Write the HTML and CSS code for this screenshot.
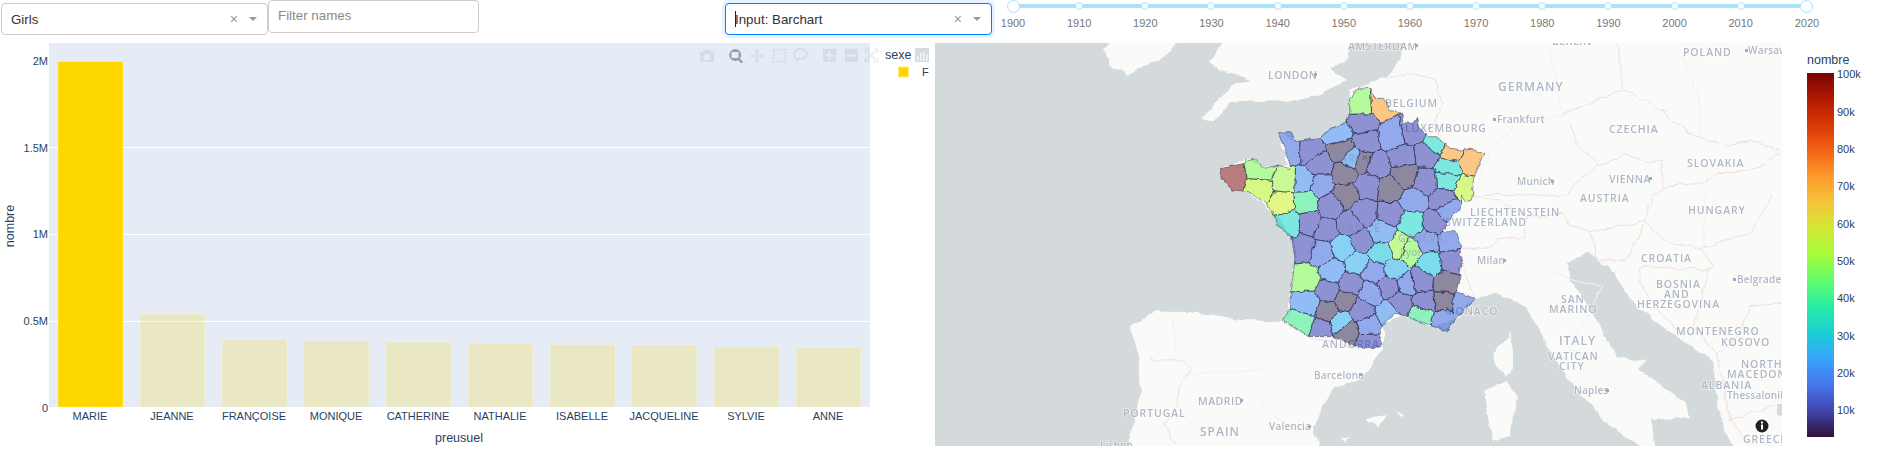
FILE: index.html

```html
<!DOCTYPE html>
<html lang="en">
<head>
  <meta charset="UTF-8" />
  <meta name="viewport" content="width=device-width, initial-scale=1" />
  <title>Prénoms</title>
  <link rel="stylesheet" href="styles.css">
</head>
<body>
  <div class="controls">
    <div class="select select-gender">
      <span class="select-value">Girls</span>
      <span class="select-clear">×</span>
      <span class="select-arrow"></span>
    </div>
    <input class="name-filter" type="text" placeholder="Filter names" />

    <div class="select select-input is-focused">
      <span class="select-value"><span class="text-cursor"></span>Input: Barchart</span>
      <span class="select-clear">×</span>
      <span class="select-arrow"></span>
    </div>

    <div class="slider">
      <div class="mark is-end"><span class="dot"></span><span class="mark-label">1900</span></div>
      <div class="mark"><span class="dot"></span><span class="mark-label">1910</span></div>
      <div class="mark"><span class="dot"></span><span class="mark-label">1920</span></div>
      <div class="mark"><span class="dot"></span><span class="mark-label">1930</span></div>
      <div class="mark"><span class="dot"></span><span class="mark-label">1940</span></div>
      <div class="mark"><span class="dot"></span><span class="mark-label">1950</span></div>
      <div class="mark"><span class="dot"></span><span class="mark-label">1960</span></div>
      <div class="mark"><span class="dot"></span><span class="mark-label">1970</span></div>
      <div class="mark"><span class="dot"></span><span class="mark-label">1980</span></div>
      <div class="mark"><span class="dot"></span><span class="mark-label">1990</span></div>
      <div class="mark"><span class="dot"></span><span class="mark-label">2000</span></div>
      <div class="mark"><span class="dot"></span><span class="mark-label">2010</span></div>
      <div class="mark is-end"><span class="dot"></span><span class="mark-label">2020</span></div>
    </div>
  </div>

  <div class="graphs">
    <!-- bar chart -->
    <svg class="bar-chart" width="935" height="420" viewBox="0 43 935 420">
      <rect class="plot-bg" x="49" y="43" width="821" height="364" />
      <g class="grid">
        <line x1="49" x2="870" y1="147.5" y2="147.5" />
        <line x1="49" x2="870" y1="234.5" y2="234.5" />
        <line x1="49" x2="870" y1="321.5" y2="321.5" />
      </g>
      <rect class="bar bar-on" x="58" y="61.5" width="65" height="345.5" />
      <rect class="bar" x="140" y="314" width="65" height="93" />
      <rect class="bar" x="222" y="340" width="65" height="67" />
      <rect class="bar" x="304" y="340.7" width="65" height="66.3" />
      <rect class="bar" x="386" y="341.7" width="65" height="65.3" />
      <rect class="bar" x="468" y="343.7" width="65" height="63.3" />
      <rect class="bar" x="550" y="344.3" width="65" height="62.7" />
      <rect class="bar" x="632" y="345" width="65" height="62" />
      <rect class="bar" x="714" y="346.7" width="65" height="60.3" />
      <rect class="bar" x="796" y="347" width="65" height="60" />

      <g class="tick tick-y">
        <text x="48" y="65">2M</text>
        <text x="48" y="152">1.5M</text>
        <text x="48" y="238">1M</text>
        <text x="48" y="325">0.5M</text>
        <text x="48" y="412">0</text>
      </g>
      <g class="tick tick-x">
        <text x="90" y="420">MARIE</text>
        <text x="172" y="420">JEANNE</text>
        <text x="254" y="420">FRANÇOISE</text>
        <text x="336" y="420">MONIQUE</text>
        <text x="418" y="420">CATHERINE</text>
        <text x="500" y="420">NATHALIE</text>
        <text x="582" y="420">ISABELLE</text>
        <text x="664" y="420">JACQUELINE</text>
        <text x="746" y="420">SYLVIE</text>
        <text x="828" y="420">ANNE</text>
      </g>
      <text class="axis-title" x="459" y="442" text-anchor="middle">preusuel</text>
      <text class="axis-title" transform="translate(14 226) rotate(-90)" text-anchor="middle">nombre</text>

      <!-- modebar -->
      <g class="modebar">
        <path d="M700 52h3l1-2h6l1 2h3v10h-14zM707 53.500a3.500 3.500 0 1 0 .01 0z" fill-rule="evenodd" />
        <path class="mode-active" d="M735 49a6 6 0 0 1 4.800 9.600l3.200 3.200-1.600 1.600-3.200-3.200A6 6 0 1 1 735 49zm-3.500 3v6h7v-6z" fill-rule="evenodd" />
        <path d="M757 49l2.500 2.500h-1.700v3.700h3.700v-1.700l2.500 2.500-2.500 2.500v-1.700h-3.700v3.700h1.700l-2.500 2.500-2.500-2.500h1.700v-3.700h-3.700v1.700l-2.500-2.500 2.500-2.500v1.700h3.700v-3.700h-1.700z" />
        <path class="mode-dash" d="M773.500 49.500h12v12h-12z" />
        <path class="mode-line" d="M794 54c0-3 3-5 6.500-5s6.500 2 6.500 5-3 5-6.500 5c-1 0-2 0-3-.5l-1 3.500M796 59c-1-1-2-3-2-5" />
        <path d="M823 49h13v13h-13zM828.500 51v3.500h-3.500v2h3.500v3.500h2v-3.500h3.500v-2h-3.500v-3.500z" fill-rule="evenodd" />
        <path d="M845 49h13v13h-13zM847 54.500v2h9v-2z" fill-rule="evenodd" />
        <path class="mode-line" d="M865.500 53v-3.500h3.500M874 49.500h3.500v3.500M877.500 58v3.500h-3.500M869 61.500h-3.500v-3.500M868 52l7 7M875 52l-7 7" />
        <rect class="mode-bars" x="915" y="48" width="14" height="14" />
        <path class="mode-bars-in" d="M917 56h1.500v5h-1.500zM920 53h1.500v8h-1.500zM923 52h1.500v9h-1.500zM926 54h1.500v7h-1.500z" />
      </g>

      <!-- legend -->
      <text class="legend-title" x="885" y="59">sexe</text>
      <rect class="legend-swatch" x="898.500" y="67" width="10" height="10" />
      <text class="legend-item" x="922" y="76">F</text>
    </svg>

    <!-- map -->
    <svg class="map" width="847" height="403" viewBox="935 43 847 403">
      <defs>
        <filter id="coast" x="-5%" y="-5%" width="110%" height="110%">
          <feTurbulence type="fractalNoise" baseFrequency="0.07" numOctaves="3" seed="4" />
          <feDisplacementMap in="SourceGraphic" scale="7" xChannelSelector="R" yChannelSelector="G" />
        </filter>
        <filter id="rough" x="-5%" y="-5%" width="110%" height="110%">
          <feTurbulence type="fractalNoise" baseFrequency="0.14" numOctaves="2" seed="9" />
          <feDisplacementMap in="SourceGraphic" scale="5" xChannelSelector="R" yChannelSelector="G" />
        </filter>
        <clipPath id="france-clip">
          <polygon id="france-shape" points="635,25 660,25 675,55 700,55 722,90 755,100 760,128 790,130 800,112 805,140 835,170 865,170 872,178 900,205 935,210 965,208 1003,220 985,260 970,300 968,340 965,360 945,365 935,345 930,385 885,435 880,455 920,455 935,500 925,525 940,540 930,575 935,600 920,625 925,640 975,655 925,710 905,735 890,752 850,740 765,708 735,700 700,730 690,750 695,800 630,805 570,775 540,770 485,770 470,768 395,718 415,705 425,625 435,535 430,505 425,470 385,440 370,405 350,370 320,350 295,335 245,330 225,305 210,290 212,265 285,250 285,240 315,235 345,265 385,255 420,268 405,205 385,155 425,155 435,185 510,175 545,145 590,125 600,95 598,60 610,35" />
        </clipPath>
      </defs>
      <rect class="sea" x="935" y="43" width="847" height="403" />
      <g class="base">
        <g filter="url(#coast)">
          <!-- mainland, in page coordinates -->
          <polygon class="land" points="1407,30 1400,60 1387,77 1365,84 1350,92 1349,112 1347,122 1320,138 1295,142 1281,131 1278,134 1288,165 1275,168 1245,160 1221,168 1220,177 1232,190 1248,192 1273,213 1293,237 1295,258 1288,315 1282,322 1247,320 1200,313 1157,310 1130,327 1138,357 1140,393 1125,460 1322,460 1313,427 1332,390 1363,377 1383,350 1383,323 1405,316 1433,327 1458,317 1475,298 1497,292 1527,307 1543,340 1567,377 1603,420 1660,460 1800,460 1800,30" />
          <!-- adriatic and ionian, over the mainland -->
          <polygon class="sea" points="1567,263 1590,252 1597,260 1610,267 1633,303 1670,333 1712,360 1715,380 1723,430 1745,460 1655,460 1652,420 1690,417 1687,403 1640,370 1647,362 1617,357 1593,313 1570,280" />
          <polygon class="sea" points="1777,403 1800,403 1800,417 1778,414" />
          <!-- corsica, sardinia, balearics -->
          <polygon class="land" points="1508,330 1507,340 1497,347 1493,357 1505,378 1513,367 1513,350" />
          <polygon class="land" points="1485,390 1507,380 1517,397 1510,437 1493,442 1488,417" />
          <polygon class="land" points="1367,418 1387,415 1378,428" />
          <polygon class="land" points="1395,411 1405,415 1402,418" />
          <polygon class="land" points="1342,438 1350,436 1346,442" />
          <!-- ireland and britain -->
          <polygon class="land" points="1103,50 1120,30 1187,30 1163,57 1127,75 1113,67" />
          <polygon class="land" points="1233,30 1210,62 1220,70 1253,78 1263,73 1230,87 1213,107 1202,118 1213,122 1230,103 1273,100 1290,102 1320,95 1347,80 1330,68 1347,58 1360,30" />
        </g>

        <g filter="url(#coast)">
          <g class="borders" transform="translate(1350 40) scale(.3333)">
            <polyline points="110,115 170,100 260,120 275,190 250,265 290,300" />
            <polyline points="800,10 820,130 830,155" />
            <polyline points="640,225 760,170 830,155 900,190 940,215" />
            <polyline points="660,250 680,310 745,375 800,360 820,340 900,370 935,360" />
            <polyline points="935,210 980,250 1050,290 1130,320 1200,300 1290,330" />
            <polyline points="745,375 680,430 650,465 560,470 430,460 370,470" />
            <polyline points="370,470 450,480 530,530 520,590 440,600 420,620 330,630 340,700 375,770" />
            <polyline points="530,530 640,520 660,555 720,575 880,545" />
            <polyline points="935,360 940,440 910,470 885,545 960,610 1060,625 1130,600 1200,580 1270,460" />
            <polyline points="940,440 1050,430 1100,400 1200,390 1295,340" />
            <polyline points="720,575 740,660 830,660 860,600 885,545" />
            <polyline points="865,685 900,680 1060,690 1090,680 1060,625" />
            <polyline points="865,685 880,750 960,850 1000,880" />
            <polyline points="1070,690 1060,760 1030,860 1100,940 1160,900 1200,800 1295,790" />
            <polyline points="1100,940 1120,1030 1140,1140 1180,1190" />
            <polyline points="1140,1140 1295,1090" />
            <polyline class="faint" points="640,225 500,250 420,330 370,470" />
            <polyline class="faint" points="600,30 620,150 640,225" />
            <polyline class="faint" points="450,60 520,150 600,180" />
            <polyline class="faint" points="1000,50 1050,180 1050,290" />
            <polyline class="faint" points="1060,625 1070,450" />
            <polyline class="faint" points="600,700 760,740 660,920 850,1100" />
          </g>
          <g class="borders" transform="translate(930 40) scale(.3333)">
            <polyline points="660,945 670,965 760,960 780,990 745,1050 745,1100 700,1150 735,1215" />
            <polyline points="1055,845 1140,890 1290,925" />
            <polyline class="faint" points="730,840 740,960" />
            <polyline class="faint" points="790,1000 1010,990 1060,930" />
            <polyline class="faint" points="950,1030 1000,1100 1100,1180" />
          </g>
        </g>

        <g class="map-label">
          <text class="city-cap" x="1268" y="79">LONDON</text>
          <text class="city-cap" x="1348" y="50">AMSTERDAM</text>
          <text class="city-cap" x="1552" y="45">BERLIN</text>
          <text class="country" x="1385" y="107">BELGIUM</text>
          <text class="country" x="1405" y="132">LUXEMBOURG</text>
          <text class="country-big" x="1498" y="91">GERMANY</text>
          <text class="country" x="1683" y="56">POLAND</text>
          <text class="city" x="1497" y="123">Frankfurt</text>
          <text class="city" x="1748" y="54">Warsaw</text>
          <text class="country" x="1609" y="133">CZECHIA</text>
          <text class="country" x="1687" y="167">SLOVAKIA</text>
          <text class="city" x="1517" y="185">Munich</text>
          <text class="city-cap" x="1609" y="183">VIENNA</text>
          <text class="country" x="1580" y="202">AUSTRIA</text>
          <text class="country" x="1470" y="216">LIECHTENSTEIN</text>
          <text class="country" x="1445" y="226">SWITZERLAND</text>
          <text class="country" x="1688" y="214">HUNGARY</text>
          <text class="city" x="1477" y="264">Milan</text>
          <text class="country" x="1641" y="262">CROATIA</text>
          <text class="country" x="1656" y="288">BOSNIA</text>
          <text class="country" x="1664" y="298">AND</text>
          <text class="country" x="1637" y="308">HERZEGOVINA</text>
          <text class="city" x="1737" y="283">Belgrade</text>
          <text class="country" x="1561" y="303">SAN</text>
          <text class="country" x="1549" y="313">MARINO</text>
          <text class="country-big" x="1559" y="345">ITALY</text>
          <text class="country" x="1548" y="360">VATICAN</text>
          <text class="country" x="1559" y="370">CITY</text>
          <text class="city" x="1574" y="394">Naples</text>
          <text class="country" x="1676" y="335">MONTENEGRO</text>
          <text class="country" x="1721" y="346">KOSOVO</text>
          <text class="country" x="1741" y="368">NORTH</text>
          <text class="country" x="1727" y="378">MACEDONIA</text>
          <text class="country" x="1701" y="389">ALBANIA</text>
          <text class="city" x="1727" y="399">Thessaloniki</text>
          <text class="country" x="1743" y="443">GREECE</text>
          <text class="country" x="1445" y="315">MONACO</text>
          <text class="country" x="1322" y="348">ANDORRA</text>
          <text class="city" x="1314" y="379">Barcelona</text>
          <text class="city-cap" x="1198" y="405">MADRID</text>
          <text class="city" x="1269" y="430">Valencia</text>
          <text class="country" x="1123" y="417">PORTUGAL</text>
          <text class="country-big" x="1200" y="436">SPAIN</text>
          <text class="city" x="1100" y="449">Lisbon</text>
        </g>
        <g class="map-dots">
          <rect x="1314" y="73" width="3" height="3" />
          <rect x="1415" y="44" width="3" height="3" />
          <rect x="1493" y="118" width="3" height="3" />
          <rect x="1745" y="49" width="3" height="3" />
          <rect x="1551" y="180" width="3" height="3" />
          <rect x="1649" y="177" width="3" height="3" />
          <rect x="1503" y="259" width="3" height="3" />
          <rect x="1733" y="278" width="3" height="3" />
          <rect x="1606" y="389" width="3" height="3" />
          <rect x="1359" y="373" width="3" height="3" />
          <rect x="1240" y="399" width="3" height="3" />
          <rect x="1308" y="425" width="3" height="3" />
        </g>
      </g>

      <!-- departements, in 3x coordinates of the France area, map.js closes the gaps -->
      <g filter="url(#rough)">
        <g transform="translate(1150 80) scale(.3333)">
          <g id="depts" class="depts" clip-path="url(#france-clip)">
            <polygon class="orange" points="635,25 660,25 675,60 700,55 720,90 755,100 760,128 695,125 680,85 650,65 640,50" />
            <polygon class="green" points="610,35 635,30 645,65 680,85 695,122 650,115 600,95 598,60" />
            <polygon class="purple" points="600,95 650,115 695,125 695,160 610,152 590,125" />
            <polygon class="blue" points="510,175 545,145 590,125 610,152 605,180 570,195 520,180" />
            <polygon class="peri" points="695,125 760,130 760,170 725,230 695,190" />
            <polygon class="purple" points="760,130 790,130 800,115 830,165 810,200 755,185" />
            <polygon class="purple" points="610,152 695,160 693,212 640,205 608,185" />
            <polygon class="dark" points="525,180 570,195 605,180 610,215 590,245 545,225" />
            <polygon class="purple" points="435,185 520,182 525,225 470,240 440,225" />
            <polygon class="peri" points="385,155 425,155 435,225 455,260 420,268 405,205" />
            <polygon class="dark" points="610,205 660,207 650,285 625,285 630,235" />
            <polygon class="blue" points="595,218 625,220 612,270 597,240" />
            <polygon class="purple" points="660,215 693,212 715,265 680,300 645,290" />
            <polygon class="purple" points="725,230 740,190 805,200 805,250 760,250 715,265" />
            <polygon class="purple" points="810,190 830,170 860,225 850,275 805,250" />
            <polygon class="purple" points="460,240 525,225 558,250 560,285 500,270 455,265" />
            <polygon class="dark" points="560,245 590,245 625,285 615,310 570,315 555,285" />
            <polygon class="purple" points="610,310 640,290 680,300 690,320 680,352 620,335" />
            <polygon class="dark" points="680,320 695,280 740,300 765,340 750,372 690,350" />
            <polygon class="dark" points="715,265 760,250 800,280 795,310 760,318" />
            <polygon class="purple" points="800,255 850,275 860,320 830,350 795,310" />
            <polygon class="turq" points="860,225 935,265 938,278 845,280" />
            <polygon class="turq" points="845,280 935,280 925,325 855,315" />
            <polygon class="turq" points="838,172 865,170 870,215 855,215" />
            <polygon class="orange" points="870,178 900,205 935,210 940,265 870,225" />
            <polygon class="orange" points="935,215 965,208 1003,220 970,300 940,265" />
            <polygon class="lime" points="945,290 968,305 965,360 945,365 925,330" />
            <polygon class="red" points="212,265 285,250 295,330 245,330 225,305 210,290" />
            <polygon class="green" points="285,240 315,235 345,265 385,255 380,305 345,300 285,295" />
            <polygon class="lime" points="278,300 345,300 375,320 370,358 320,350 295,335" />
            <polygon class="lgreen" points="385,255 435,270 440,330 395,342 372,318" />
            <polygon class="yellow" points="350,370 380,340 430,332 445,370 410,412 375,385" />
            <polygon class="blue" points="440,270 495,270 485,315 465,335 440,335" />
            <polygon class="peri" points="495,275 525,275 555,315 525,350 480,345 480,320" />
            <polygon class="mint" points="430,335 480,345 515,350 500,390 440,402 445,370" />
            <polygon class="turq" points="370,405 410,412 445,402 465,460 420,465 385,440" />
            <polygon class="purple" points="445,402 500,395 510,460 465,460" />
            <polygon class="purple" points="500,395 545,425 560,470 510,485 510,460" />
            <polygon class="purple" points="515,350 550,345 580,380 560,420 505,395" />
            <polygon class="dark" points="555,310 615,315 635,370 585,385 550,345" />
            <polygon class="purple" points="635,355 680,355 690,420 650,440 620,430 585,385" />
            <polygon class="purple" points="585,385 625,430 640,455 590,460 555,430" />
            <polygon class="purple" points="680,355 750,375 750,415 725,435 690,430" />
            <polygon class="peri" points="765,315 795,315 835,355 835,395 800,410 755,395 755,340" />
            <polygon class="purple" points="835,350 920,325 930,355 880,370 835,385" />
            <polygon class="peri" points="885,370 930,355 930,385 885,435 860,405" />
            <polygon class="purple" points="835,385 860,405 880,440 860,470 830,455" />
            <polygon class="turq" points="755,395 800,410 835,405 830,450 770,475 730,440" />
            <polygon class="blue" points="645,440 690,430 725,435 745,465 720,495 660,475" />
            <polygon class="purple" points="590,460 640,455 660,480 650,515 610,520" />
            <polygon class="sky" points="560,470 590,460 610,520 590,540 560,520" />
            <polygon class="purple" points="430,470 465,462 510,485 490,565 450,530 425,500" />
            <polygon class="peri" points="480,520 510,485 555,490 530,530 495,565" />
            <polygon class="blue" points="505,565 540,525 585,545 590,590 560,612 515,600" />
            <polygon class="sky" points="585,540 610,520 650,520 655,545 625,585 590,590" />
            <polygon class="sky2" points="660,510 675,475 720,495 745,545 700,548 660,545" />
            <polygon class="lgreen" points="735,475 765,470 770,510 745,540 730,510" />
            <polygon class="green" points="765,470 790,475 810,520 780,555 745,540 770,510" />
            <polygon class="peri" points="800,470 830,450 860,470 855,510 825,515" />
            <polygon class="peri" points="865,465 920,455 935,500 900,510 860,485" />
            <polygon class="purple" points="850,515 905,510 940,540 930,575 890,570" />
            <polygon class="sky2" points="825,510 850,520 890,575 850,605 800,540" />
            <polygon class="purple" points="800,555 845,605 840,640 790,640 785,575" />
            <polygon class="dark" points="850,610 895,575 935,600 915,625 840,645" />
            <polygon class="dark" points="840,650 915,625 925,670 890,690 850,680" />
            <polygon class="peri" points="925,640 975,655 925,710 915,685" />
            <polygon class="peri" points="855,690 920,690 910,735 890,750 850,740" />
            <polygon class="mint" points="790,675 850,690 850,738 765,708" />
            <polygon class="purple" points="790,640 840,650 850,690 815,690" />
            <polygon class="peri" points="745,600 795,555 800,640 770,640 745,625" />
            <polygon class="sky" points="700,548 745,545 775,570 735,600 715,590" />
            <polygon class="peri" points="650,545 700,550 705,585 660,610 635,580" />
            <polygon class="purple" points="690,600 735,590 750,625 715,655 690,630" />
            <polygon class="peri" points="620,620 660,590 690,625 710,680 670,690 625,650" />
            <polygon class="purple" points="570,610 625,580 635,600 600,640 570,635" />
            <polygon class="purple" points="715,655 770,640 790,665 760,705 715,670" />
            <polygon class="blue" points="665,705 710,680 745,670 760,705 700,730" />
            <polygon class="purple" points="605,670 625,650 670,695 665,715 610,715" />
            <polygon class="peri" points="610,715 665,718 700,735 680,765 620,770" />
            <polygon class="purple" points="620,775 680,762 695,800 630,805" />
            <polygon class="dark" points="555,745 585,730 625,745 625,785 570,775" />
            <polygon class="sky" points="535,730 570,715 585,680 610,715 585,730 555,745 545,775" />
            <polygon class="dark" points="555,650 600,640 620,650 590,680 555,685" />
            <polygon class="purple" points="500,645 515,605 560,612 565,640 545,665" />
            <polygon class="dark" points="490,680 545,665 570,690 560,722 500,715" />
            <polygon class="purple" points="500,720 530,725 540,770 485,770" />
            <polygon class="mint" points="395,718 430,705 500,705 495,745 470,768" />
            <polygon class="blue" points="425,625 500,650 510,665 490,680 495,705 415,705" />
            <polygon class="green" points="435,535 470,575 515,600 495,650 435,620" />
          </g>
          <use class="france-line" href="#france-shape" />
          <polygon class="paris-spot" points="640,230 650,230 650,240 640,240" />
        </g>
      </g>

      <!-- labels that show through the departements -->
      <g class="map-label over-label">
        <text class="country" x="1333" y="162">PARIS</text>
        <text class="country-big" x="1330" y="232">FRANCE</text>
        <text class="country" x="1398" y="242">GENEVA</text>
        <text class="city" x="1400" y="256">Lyon</text>
      </g>

      <g class="info-icon">
        <circle class="info-halo" cx="1762" cy="426" r="9" />
        <circle cx="1762" cy="426" r="6.500" />
        <path class="info-i" d="M1761 424.500h2v5h-2zM1761 421.500h2v2h-2z" />
      </g>
    </svg>

    <!-- colour scale -->
    <svg class="colorbar" width="105" height="420" viewBox="1782 43 105 420">
      <defs>
        <linearGradient id="turbo" x1="0" y1="1" x2="0" y2="0">
          <stop offset="0" stop-color="#30123b" />
          <stop offset=".0714" stop-color="#4145ab" />
          <stop offset=".1429" stop-color="#4675ed" />
          <stop offset=".2143" stop-color="#39a2fc" />
          <stop offset=".2857" stop-color="#1bcfd4" />
          <stop offset=".3571" stop-color="#24eca6" />
          <stop offset=".4286" stop-color="#61fc6c" />
          <stop offset=".5" stop-color="#a4fc3b" />
          <stop offset=".5714" stop-color="#d1e834" />
          <stop offset=".6429" stop-color="#f3c63a" />
          <stop offset=".7143" stop-color="#fe9b2d" />
          <stop offset=".7857" stop-color="#f36315" />
          <stop offset=".8571" stop-color="#d93806" />
          <stop offset=".9286" stop-color="#b11901" />
          <stop offset="1" stop-color="#7a0403" />
        </linearGradient>
      </defs>
      <text class="legend-title" x="1807" y="64">nombre</text>
      <rect x="1807" y="73" width="27" height="364" fill="url(#turbo)" />
      <g class="tick">
        <text x="1837" y="78">100k</text>
        <text x="1837" y="116">90k</text>
        <text x="1837" y="153">80k</text>
        <text x="1837" y="190">70k</text>
        <text x="1837" y="228">60k</text>
        <text x="1837" y="265">50k</text>
        <text x="1837" y="302">40k</text>
        <text x="1837" y="340">30k</text>
        <text x="1837" y="377">20k</text>
        <text x="1837" y="414">10k</text>
      </g>
    </svg>
  </div>
  <script src="map.js"></script>
</body>
</html>
```

FILE: styles.css

```css
body {
  margin: 0;
  overflow: hidden;
  background-color: #fff;
  font-family: 'Liberation Sans', Arial, sans-serif;
  color: #333;
}

.controls {
  display: flex;
  align-items: flex-start;
  height: 43px;
}

.select {
  display: flex;
  align-items: center;
  box-sizing: border-box;
  width: 267px;
  height: 32px;
  margin-top: 3px;
  padding: 0 10px 0 9px;
  border: 1px solid #ccc;
  border-radius: 4px;
  font-size: 13.333px;
  background: #fff;
}

.select-gender {
  margin-left: 1px;
}

.select-value {
  flex: 1;
  color: #333;
}

.select-clear {
  margin-right: 11px;
  font-size: 14px;
  line-height: 16px;
  color: #999;
}

.select-arrow {
  width: 0;
  height: 0;
  border-top: 4px solid #999;
  border-left: 4px solid transparent;
  border-right: 4px solid transparent;
}

.name-filter {
  box-sizing: border-box;
  width: 211px;
  height: 33px;
  padding: 0 10px 3px 9px;
  border: 1px solid #ccc;
  border-radius: 4px;
  font-family: inherit;
  font-size: 13.333px;
  color: #333;
}

.name-filter::placeholder {
  color: #8a8a8a;
}

.select-input {
  margin-left: 246px;
}

.is-focused {
  border-color: #007eff;
  box-shadow: 0 0 0 3px rgba(0, 126, 255, 0.1);
}

.text-cursor {
  display: inline-block;
  width: 1px;
  height: 16px;
  margin-right: -1px;
  vertical-align: -3px;
  background: #222;
}

.slider {
  display: flex;
  justify-content: space-between;
  width: 794px;
  height: 34px;
  margin-left: 21px;
  background: linear-gradient(#abe2fb, #abe2fb) no-repeat 0 4px / 100% 4px;
}

.mark {
  display: flex;
  flex-direction: column;
  align-items: center;
  width: 0;
}

.dot {
  flex: none;
  box-sizing: border-box;
  width: 8px;
  height: 8px;
  margin-top: 2px;
  margin-bottom: 6px;
  border: 1px solid #abe2fb;
  border-radius: 50%;
  background: #fff;
}

.is-end .dot {
  width: 13px;
  height: 13px;
  margin-top: 0;
  margin-bottom: 3px;
  border-width: 1.5px;
}

.mark-label {
  font-size: 11px;
  line-height: 14px;
  color: #777;
}

.graphs {
  display: flex;
  align-items: flex-start;
}

.graphs svg {
  display: block;
  flex: none;
}

/* bar chart */
.plot-bg {
  fill: #e5ecf6;
}

.grid line {
  stroke: #fff;
  stroke-width: 1;
}

.bar {
  fill: rgba(255, 215, 0, 0.2);
  stroke: rgba(255, 255, 255, 0.25);
  stroke-width: 1;
}

.bar-on {
  fill: #ffd700;
}

.tick text {
  font-size: 11px;
  fill: #2a3f5f;
}

.tick-y text {
  text-anchor: end;
}

.tick-x text {
  text-anchor: middle;
}

.axis-title {
  font-size: 12.5px;
  fill: #2a3f5f;
}

.legend-title {
  font-size: 12.5px;
  fill: #2a3f5f;
}

.legend-item {
  font-size: 11px;
  fill: #2a3f5f;
}

.legend-swatch {
  fill: #ffd700;
  stroke: #ffe97a;
  stroke-width: 1;
}

.modebar path {
  fill: rgba(68, 68, 68, 0.09);
}

.modebar .mode-active {
  fill: #9a9ea6;
}

.modebar .mode-dash {
  fill: none;
  stroke: rgba(68, 68, 68, 0.12);
  stroke-width: 1.500;
  stroke-dasharray: 2 1.500;
}

.modebar .mode-line {
  fill: none;
  stroke: rgba(68, 68, 68, 0.1);
  stroke-width: 1.500;
}

.mode-bars {
  fill: #d5dbe3;
}

.modebar .mode-bars-in {
  fill: #fff;
  opacity: 0.7;
}

/* map */
.sea {
  fill: #d4dadc;
}

.land {
  fill: #fafaf8;
}

.base {
  filter: blur(0.3px);
}

.borders polyline {
  fill: none;
  stroke: #f1dde0;
  stroke-width: 3;
}

.borders .faint {
  stroke: #f3f0f0;
}

.map-label text {
  font-family: 'Open Sans', sans-serif;
  font-weight: 600;
  fill: #aeb7c5;
  stroke: rgba(255, 255, 255, 0.6);
  stroke-width: 1.5px;
  paint-order: stroke;
}

.over-label {
  opacity: 0.45;
}

.over-label text {
  fill: #7f8db8;
  stroke: none;
}

.map-label .country {
  font-size: 10.5px;
  letter-spacing: 0.9px;
}

.map-label .country-big {
  font-size: 12px;
  letter-spacing: 1px;
}

.map-label .city {
  font-size: 10px;
  letter-spacing: 0.2px;
}

.map-label .city-cap {
  font-size: 10.5px;
  letter-spacing: 0.5px;
}

.map-dots rect {
  fill: #a0aaba;
}

.depts polygon {
  fill-opacity: 0.5;
  stroke: #2f3350;
  stroke-opacity: 0.8;
  stroke-width: 2.400;
  stroke-linejoin: round;
}

.france-line {
  fill: none;
  stroke: #2f3350;
  stroke-opacity: 0.75;
  stroke-width: 2;
  stroke-linejoin: round;
}

.paris-spot {
  fill: #f0a030;
  stroke: #2f3350;
  stroke-width: 2;
}

.depts .dark { fill: #200e46; }
.depts .purple { fill: #242cac; }
.depts .peri { fill: #2c5ae0; }
.depts .blue { fill: #2c80f0; }
.depts .sky { fill: #0ea6f0; }
.depts .sky2 { fill: #06bde0; }
.depts .turq { fill: #02d6c6; }
.depts .mint { fill: #20ea80; }
.depts .green { fill: #6efc44; }
.depts .lgreen { fill: #96f838; }
.depts .lime { fill: #b0f61c; }
.depts .yellow { fill: #c8f410; }
.depts .orange { fill: #fc9410; }
.depts .red { fill: #760000; }

.info-icon circle {
  fill: #222;
}

.info-icon .info-halo {
  fill: rgba(255, 255, 255, 0.5);
}

.info-i {
  fill: #fff;
}
```

FILE: map.js

```js
// grow each departement up to the middle line with its neighbours, so no gaps are left
const polys = Array.from(document.querySelectorAll("#depts polygon"));

function readPoints(poly) {
  return poly.getAttribute("points").trim().split(" ").map(function (p) {
    return p.split(",").map(Number);
  });
}

function center(points) {
  let x = 0, y = 0;
  points.forEach(function (p) { x += p[0]; y += p[1]; });
  return [x / points.length, y / points.length];
}

function clip(cell, a, b) {
  const mx = (a[0] + b[0]) / 2, my = (a[1] + b[1]) / 2;
  const dx = b[0] - a[0], dy = b[1] - a[1];
  const side = function (p) { return (p[0] - mx) * dx + (p[1] - my) * dy; };
  const out = [];
  cell.forEach(function (p, i) {
    const q = cell[(i + 1) % cell.length];
    const sp = side(p), sq = side(q);
    if (sp <= 0) out.push(p);
    if ((sp < 0 && sq > 0) || (sp > 0 && sq < 0)) {
      const t = sp / (sp - sq);
      out.push([p[0] + (q[0] - p[0]) * t, p[1] + (q[1] - p[1]) * t]);
    }
  });
  return out;
}

const seeds = polys.map(function (poly) { return center(readPoints(poly)); });

polys.forEach(function (poly, i) {
  let cell = [[100, 0], [1100, 0], [1100, 900], [100, 900]];
  seeds.forEach(function (seed, j) {
    if (j !== i) cell = clip(cell, seeds[i], seed);
  });
  poly.setAttribute("points", cell.map(function (p) {
    return p[0].toFixed(1) + "," + p[1].toFixed(1);
  }).join(" "));
});
```
